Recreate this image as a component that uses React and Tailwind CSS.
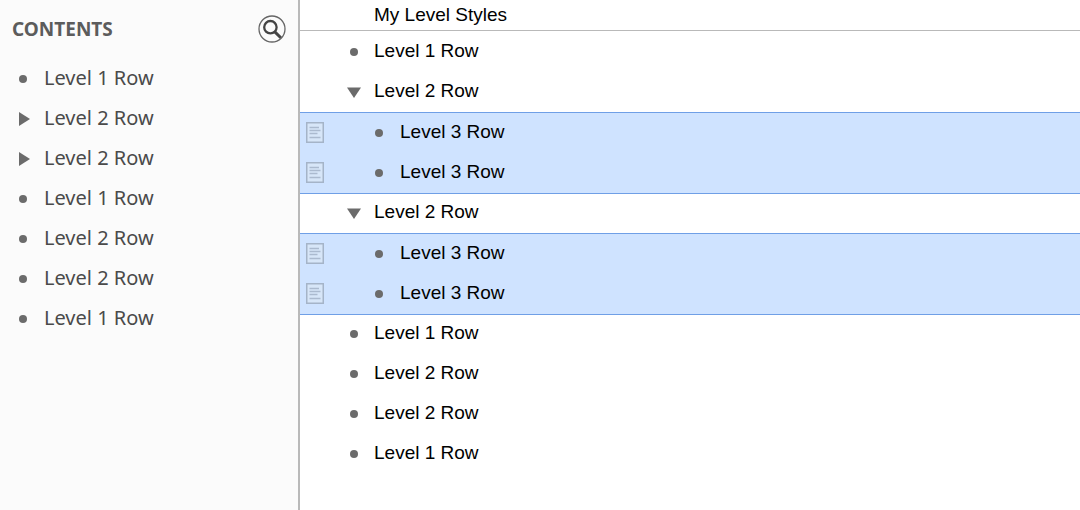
const contents = [
  { label: "Level 1 Row" },
  { label: "Level 2 Row", collapsed: true },
  { label: "Level 2 Row", collapsed: true },
  { label: "Level 1 Row" },
  { label: "Level 2 Row" },
  { label: "Level 2 Row" },
  { label: "Level 1 Row" },
];

const outline = [
  { label: "Level 1 Row" },
  { label: "Level 2 Row", children: ["Level 3 Row", "Level 3 Row"] },
  { label: "Level 2 Row", children: ["Level 3 Row", "Level 3 Row"] },
  { label: "Level 1 Row" },
  { label: "Level 2 Row" },
  { label: "Level 2 Row" },
  { label: "Level 1 Row" },
];

function Bullet() {
  return <span className="block size-2 rounded-full bg-[#6b6b6b]" />;
}

function RightTriangle() {
  return (
    <svg viewBox="0 0 11 14" className="block h-3.5 w-[11px] fill-[#6b6b6b]" aria-hidden="true">
      <path d="M0 0 L11 7 L0 14 Z" />
    </svg>
  );
}

function DownTriangle() {
  return (
    <svg viewBox="0 0 14 11" className="block h-[11px] w-3.5 fill-[#6b6b6b]" aria-hidden="true">
      <path d="M0 0.5 H14 L7 11 Z" />
    </svg>
  );
}

function NoteIcon() {
  return (
    <svg viewBox="0 0 18 21" className="block h-[21px] w-[18px]" fill="none" aria-hidden="true">
      <rect x="0.75" y="0.75" width="16.5" height="19.5" fill="#d7e6f8" stroke="#a5b4c8" strokeWidth="1.5" />
      <path d="M3.5 5.5 H13 M3.5 8.5 H14.5 M3.5 11.5 H11.5 M3.5 15.5 H14.5" stroke="#abbacf" strokeWidth="1.3" />
    </svg>
  );
}

function SearchIcon() {
  return (
    <svg viewBox="0 0 28 28" className="block size-7" fill="none" aria-hidden="true">
      <circle cx="14" cy="14" r="13" stroke="#666666" strokeWidth="1.3" />
      <circle cx="12.4" cy="12.2" r="6.2" stroke="#444444" strokeWidth="2.3" />
      <path d="M16.6 16.6 L22.8 22.8" stroke="#444444" strokeWidth="3" />
    </svg>
  );
}

function ParentRow({ item }) {
  return (
    <div className="flex h-10 items-center">
      <span className="flex w-[74px] shrink-0 justify-center pl-[34px]">
        {item.children ? <DownTriangle /> : <Bullet />}
      </span>
      <span className="pb-0.5">{item.label}</span>
    </div>
  );
}

function SelectedRows({ rows }) {
  return (
    <ul className="-mb-px border-y border-[#6f9fe6] bg-[#cfe3ff]">
      {rows.map((label, i) => (
        <li key={i} className="flex h-10 items-center pl-1.5">
          <button type="button" aria-label="Show note" className="pb-0.5">
            <NoteIcon />
          </button>
          <span className="flex w-[76px] shrink-0 justify-center pl-[34px]">
            <Bullet />
          </span>
          <span className="pb-0.5">{label}</span>
        </li>
      ))}
    </ul>
  );
}

export default function App() {
  return (
    <div className="flex min-h-screen bg-white">
      <aside className="w-[300px] shrink-0 border-r-2 border-[#b9b9b9] bg-[#fbfbfb] font-['Noto_Sans',sans-serif]">
        <div className="flex h-[58px] items-center justify-between px-3">
          <h2 className="text-[19px] font-bold text-[#5c5c5c]">CONTENTS</h2>
          <button type="button" aria-label="Search">
            <SearchIcon />
          </button>
        </div>
        <ul className="pt-px text-xl text-[#4a4a4a]">
          {contents.map((item, i) => (
            <li key={i} className="flex h-10 items-center pl-[19px]">
              <span className="w-[25px] shrink-0">
                {item.collapsed ? <RightTriangle /> : <Bullet />}
              </span>
              <span className="pb-0.5">{item.label}</span>
            </li>
          ))}
        </ul>
      </aside>
      <main className="min-w-0 flex-1 font-['Liberation_Sans',Arial,sans-serif] text-[19px]/7 text-black">
        <h1 className="border-b border-[#b9b9b9] py-px pl-[74px]">My Level Styles</h1>
        <ul className="pt-px">
          {outline.map((item, i) => (
            <li key={i}>
              <ParentRow item={item} />
              {item.children && <SelectedRows rows={item.children} />}
            </li>
          ))}
        </ul>
      </main>
    </div>
  );
}
